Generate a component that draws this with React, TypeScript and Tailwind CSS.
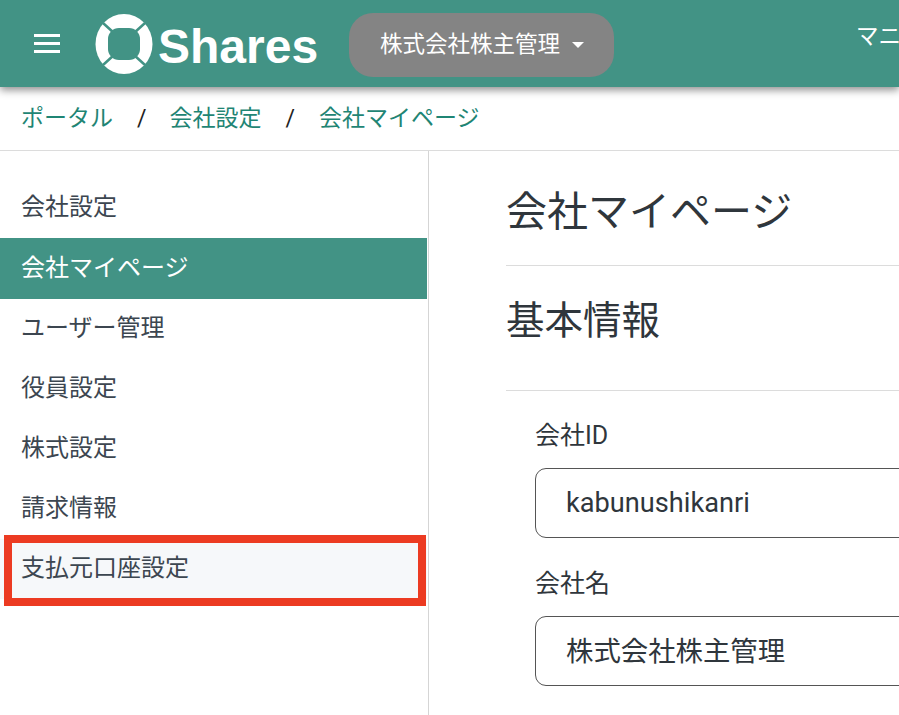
import React from "react";

const items = ["会社設定", "会社マイページ", "ユーザー管理", "役員設定", "株式設定", "請求情報", "支払元口座設定"];

function Logo() {
  return (
    <svg width="58" height="60" viewBox="0 0 58 60" className="shrink-0">
      <ellipse cx="29" cy="30" rx="28.5" ry="30" fill="#fff" />
      <rect x="13" y="14" width="32" height="32" rx="11" fill="#429385" />
      <path d="M8 9 L19 19 M50 9 L39 19 M8 51 L19 41 M50 51 L39 41" stroke="#429385" strokeWidth="2.5" />
    </svg>
  );
}

export default function App() {
  return (
    <div className="w-[899px] h-[715px] overflow-hidden bg-white flex flex-col font-['Roboto','Noto_Sans_CJK_JP',sans-serif]">
      <header className="h-[87px] shrink-0 bg-[#429385] flex items-center pl-[34px] relative z-10 shadow-[0_3px_8px_rgba(0,0,0,0.45)] whitespace-nowrap">
        <div className="w-[26px] flex flex-col gap-[5px] shrink-0">
          <div className="h-[3px] bg-white" />
          <div className="h-[3px] bg-white" />
          <div className="h-[3px] bg-white" />
        </div>
        <div className="ml-[35px]"><Logo /></div>
        <span className="ml-[5px] mt-[6px] text-white text-[48px] font-bold leading-none font-['Liberation_Sans',sans-serif]">Shares</span>
        <button className="ml-[31px] mt-[3px] w-[265px] h-[64px] rounded-[24px] bg-[#848484] text-white text-[22.5px] flex items-center pl-[31px] shrink-0">
          株式会社株主管理
          <span className="ml-[12px] w-0 h-0 border-x-[6px] border-x-transparent border-t-[6px] border-t-white" />
        </button>
        <span className="ml-[242px] -mt-[14px] text-white text-[22.5px]">マニュアル</span>
      </header>

      <nav className="h-[64px] shrink-0 border-b border-[#dcdcdc] flex items-center pl-[21px] pt-[2px] text-[23px] text-[#1f8574] whitespace-nowrap">
        <span>ポータル</span>
        <span className="ml-[24px] mr-[23px] text-[#222]">/</span>
        <span>会社設定</span>
        <span className="mx-[24px] text-[#222]">/</span>
        <span>会社マイページ</span>
      </nav>

      <div className="flex flex-1 min-h-0">
        <aside className="w-[429px] shrink-0 border-r border-[#d5d5d5] pt-[27px] text-[24px] text-[#3c4650] leading-none">
          {items.map((t, i) => (
            <div
              key={t}
              className={
                i === 1
                  ? "h-[61px] w-[427px] flex items-center pl-[21px] pb-[2px] bg-[#429385] text-white"
                  : i === 6
                  ? "relative h-[60px] w-[427px] flex items-center pl-[21px] pb-[3px] bg-[#f6f8fa]"
                  : "h-[60px] flex items-center pl-[21px] pb-[3px]"
              }
            >
              {t}
              {i === 6 && (
                <div className="absolute left-[4px] top-[-4px] w-[422px] h-[71px] border-[8px] border-[#ec3b22]" />
              )}
            </div>
          ))}
        </aside>

        <main className="flex-1 min-w-0 overflow-hidden pl-[77px] text-[#2f363c] whitespace-nowrap">
          <h1 className="h-[115px] border-b border-[#dcdcdc] text-[41px] leading-none pt-[41px]">会社マイページ</h1>
          <h2 className="h-[125px] border-b border-[#dcdcdc] text-[38.5px] leading-none pt-[36px]">基本情報</h2>
          <div className="pl-[29px] w-[600px]">
            <label className="block text-[25px] leading-none mt-[32px]">会社ID</label>
            <div className="w-[560px] h-[70px] mt-[20px] border border-[#555] rounded-[11px] flex items-center pl-[30px] pt-[1px] text-[27.2px]">kabunushikanri</div>
            <label className="block text-[25px] leading-none mt-[33px]">会社名</label>
            <div className="w-[560px] h-[70px] mt-[20px] border border-[#555] rounded-[11px] flex items-center pl-[30px] pt-[3px] text-[27.4px]">株式会社株主管理</div>
          </div>
        </main>
      </div>
    </div>
  );
}
